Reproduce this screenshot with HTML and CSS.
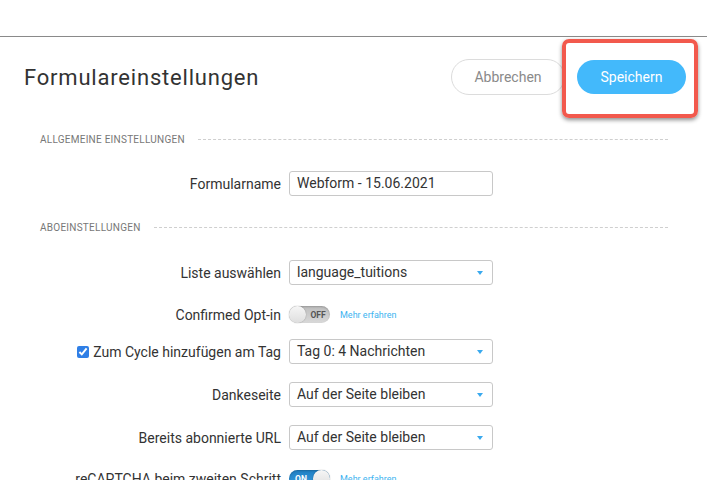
FILE: index.html
```html
<!DOCTYPE html>
<html lang="de">
<head>
<meta charset="UTF-8">
<title>Formulareinstellungen</title>
<link rel="stylesheet" href="styles.css">
</head>
<body>
<div class="topbar"></div>

<div class="panel">
	<div class="panel-head">
		<h1 class="panel-title">Formulareinstellungen</h1>
		<div class="actions">
			<button class="btn btn--cancel">Abbrechen</button>
			<button class="btn btn--save">Speichern</button>
		</div>
		<div class="highlight"></div>
	</div>

	<div class="section">
		<span class="section-name">Allgemeine Einstellungen</span>
	</div>

	<div class="row row--first">
		<label class="row-label">Formularname</label>
		<div class="field">Webform - 15.06.2021</div>
	</div>

	<div class="section section--second">
		<span class="section-name">Aboeinstellungen</span>
	</div>

	<div class="row row--first row--list">
		<label class="row-label">Liste auswählen</label>
		<div class="field field--select">language_tuitions</div>
	</div>

	<div class="row row--switch">
		<label class="row-label">Confirmed Opt-in</label>
		<span class="switch"><span class="switch-knob"></span><span class="switch-text">OFF</span></span>
		<a class="more">Mehr erfahren</a>
	</div>

	<div class="row">
		<label class="row-label"><input type="checkbox" class="check" checked>Zum Cycle hinzufügen am Tag</label>
		<div class="field field--select">Tag 0: 4 Nachrichten</div>
	</div>

	<div class="row">
		<label class="row-label">Dankeseite</label>
		<div class="field field--select">Auf der Seite bleiben</div>
	</div>

	<div class="row row--tight">
		<label class="row-label">Bereits abonnierte URL</label>
		<div class="field field--select">Auf der Seite bleiben</div>
	</div>

	<div class="row row--switch">
		<label class="row-label">reCAPTCHA beim zweiten Schritt</label>
		<span class="switch switch--on"><span class="switch-text">ON</span><span class="switch-knob"></span></span>
		<a class="more">Mehr erfahren</a>
	</div>
</div>
</body>
</html>
```

FILE: styles.css
```css
* {
	box-sizing: border-box;
}

html, body {
	height: 100%;
}

body {
	margin: 0;
	background: #fff;
	font-family: Roboto, "Liberation Sans", sans-serif;
	color: #333;
	overflow: hidden;
}

.topbar {
	height: 37px;
	border-bottom: 1px solid #8c8c8c;
}

.panel {
	box-shadow: -1px 1px 3px rgba(0,0,0,.08);
}

.panel-head {
	position: relative;
	display: flex;
	align-items: center;
	justify-content: space-between;
	height: 80px;
	padding: 0 21px 0 24px;
}

.panel-title {
	margin: 0;
	font-size: 22px;
	font-weight: 400;
	letter-spacing: 0.8px;
	color: #333;
}

.actions {
	display: flex;
	align-items: center;
	gap: 12px;
}

.btn {
	font-family: inherit;
	font-size: 14px;
	border-radius: 18px;
	cursor: pointer;
}

.btn--cancel {
	width: 114px;
	height: 36px;
	background: #fff;
	border: 1px solid #dcdcdc;
	color: #8a8a8a;
}

.btn--save {
	width: 109px;
	height: 34px;
	background: #43b9fb;
	border: 0;
	color: #fff;
}

.highlight {
	position: absolute;
	left: 562px;
	top: 2px;
	width: 136px;
	height: 79px;
	border: 4px solid #f2594d;
	border-radius: 7px;
	box-shadow: 0 2px 4px rgba(0,0,0,.45);
}

.section {
	display: flex;
	align-items: center;
	gap: 13px;
	margin: 16px 39px 0 40px;
	height: 12px;
}

.section::after {
	content: "";
	flex: 1;
	border-top: 1px dashed #cfcfcf;
}

.section--second {
	margin-top: 25px;
}

.section-name {
	font-size: 10px;
	text-transform: uppercase;
	color: #777;
	letter-spacing: 0.25px;
}

.row {
	display: flex;
	align-items: center;
	height: 25px;
	margin-bottom: 18px;
}

.row--first {
	margin-top: 26px;
	margin-bottom: 17px;
}

.row--list {
	margin-top: 27px;
}

.row--switch {
	margin-bottom: 12px;
}

.row--tight {
	margin-bottom: 16px;
}

.row-label {
	width: 281px;
	text-align: right;
	font-size: 14px;
	color: #333;
	display: flex;
	align-items: center;
	justify-content: flex-end;
}

.check {
	width: 12px;
	height: 12px;
	margin: 0 4px 0 0;
	accent-color: #2f7fe6;
}

.field {
	position: relative;
	margin-left: 8px;
	width: 204px;
	height: 25px;
	line-height: 23px;
	padding: 0 7px;
	border: 1px solid #c8c8c8;
	border-radius: 3px;
	font-size: 14px;
	color: #333;
}

.field--select::after {
	content: "";
	position: absolute;
	right: 9px;
	top: 10px;
	border-left: 3.5px solid transparent;
	border-right: 3.5px solid transparent;
	border-top: 4px solid #3aa9ee;
}

.switch {
	display: inline-flex;
	align-items: center;
	margin-left: 8px;
	width: 41px;
	height: 17px;
	border-radius: 9px;
	background: linear-gradient(#bdbdbd, #d9d9d9);
	box-shadow: inset 0 1px 2px rgba(0,0,0,.2);
}

.switch-knob {
	width: 17px;
	height: 17px;
	border-radius: 50%;
	background: linear-gradient(#f6f6f6, #dedede);
	box-shadow: 0 0 1px rgba(0,0,0,.5);
	flex: none;
}

.switch-text {
	flex: 1;
	text-align: center;
	font-size: 8.5px;
	font-weight: 700;
	color: #555;
}

.switch--on {
	background: linear-gradient(#1f7fc4, #3a9bdc);
}

.switch--on .switch-text {
	color: #fff;
}

.more {
	margin-left: 10px;
	font-size: 9px;
	color: #3db3f0;
}
```
